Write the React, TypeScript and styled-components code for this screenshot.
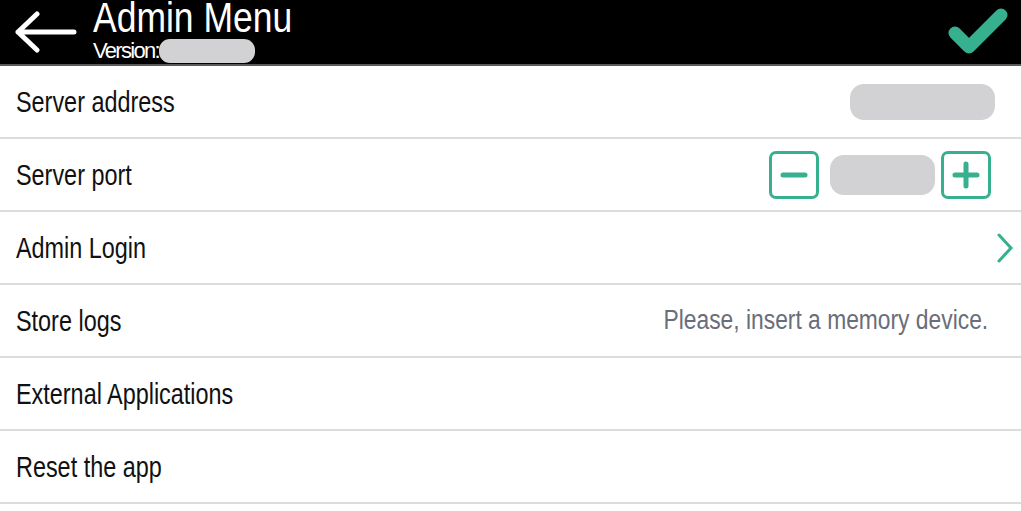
import React from 'react'
import styled, { createGlobalStyle } from 'styled-components'

const teal = '#36b08f'

const GlobalStyle = createGlobalStyle`
  html, body {
    margin: 0;
    padding: 0;
    background: #ffffff;
  }
  body {
    font-family: 'Liberation Sans', Arial, sans-serif;
    color: #111;
  }
`

const Screen = styled.div`
  width: 1021px;
  height: 511px;
  overflow: hidden;
  background: #fff;
`

const Header = styled.header`
  display: flex;
  align-items: center;
  height: 64px;
  padding: 0 12px 0 15px;
  background: #000;
  border-bottom: 2px solid #5a5a5a;
`

const BackButton = styled.div`
  display: flex;
  width: 62px;
  height: 44px;
  margin-right: 16px;
`

const TitleBlock = styled.div`
  display: flex;
  flex-direction: column;
  flex: 1;
  margin-top: -3px;
`

// the device font is a condensed face, so the text is squeezed horizontally
const Title = styled.h1`
  margin: 0;
  font-weight: 400;
  font-size: 42px;
  line-height: 40px;
  color: #fff;
  transform: scaleX(0.845);
  transform-origin: left center;
`

const VersionRow = styled.div`
  display: flex;
  align-items: center;
  margin-top: 1px;
  font-size: 22px;
  line-height: 24px;
  color: #fff;
  letter-spacing: -1.7px;
`

const Redacted = styled.span<{ $w: number; $h: number; $r?: number }>`
  display: inline-block;
  width: ${(p) => p.$w}px;
  height: ${(p) => p.$h}px;
  border-radius: ${(p) => p.$r ?? 14}px;
  background: #d2d2d4;
`

const List = styled.ul`
  margin: 0;
  padding: 0;
  list-style: none;
`

const Row = styled.li`
  display: flex;
  align-items: center;
  justify-content: space-between;
  height: 71px;
  padding: 0 6px 0 16px;
  border-bottom: 2px solid #dcdcdc;
`

const Label = styled.span`
  font-size: 30px;
  color: #111;
  white-space: nowrap;
  transform: scaleX(0.78);
  transform-origin: left center;
`

const Hint = styled.span`
  margin-right: 27px;
  font-size: 27px;
  color: #6a6d7a;
  white-space: nowrap;
  transform: scaleX(0.845);
  transform-origin: right center;
`

const Stepper = styled.div`
  display: flex;
  align-items: center;
  margin-right: 24px;
`

const StepButton = styled.button`
  display: flex;
  align-items: center;
  justify-content: center;
  width: 50px;
  height: 48px;
  padding: 0;
  border: 3px solid ${teal};
  border-radius: 7px;
  background: #fff;
`

const PortValue = styled.div`
  display: flex;
  margin: 0 6px 0 11px;
`

const RightSlot = styled.div<{ $mr: number }>`
  display: flex;
  align-items: center;
  margin-right: ${(p) => p.$mr}px;
`

function BackArrow() {
  return (
    <svg width="62" height="44" viewBox="0 0 62 44" fill="none">
      <path
        d="M3 22 H59 M22 4 L3 22 L22 40"
        stroke="#fff"
        strokeWidth="5"
        strokeLinecap="round"
        strokeLinejoin="round"
      />
    </svg>
  )
}

function Check() {
  return (
    <svg width="64" height="58" viewBox="0 0 64 58" fill="none">
      <path
        d="M10 30 L24 44 L56 12"
        stroke={teal}
        strokeWidth="13"
        strokeLinecap="round"
        strokeLinejoin="round"
      />
    </svg>
  )
}

function Chevron() {
  return (
    <svg width="20" height="32" viewBox="0 0 20 32" fill="none">
      <path d="M4 3 L16 16 L4 29" stroke={teal} strokeWidth="3" strokeLinecap="round" />
    </svg>
  )
}

function Sign({ plus }: { plus?: boolean }) {
  return (
    <svg width="30" height="30" viewBox="0 0 30 30" fill="none">
      <path
        d={plus ? 'M4 15 H26 M15 4 V26' : 'M4 15 H26'}
        stroke={teal}
        strokeWidth="5"
        strokeLinecap="round"
      />
    </svg>
  )
}

export default function App() {
  return (
    <Screen>
      <GlobalStyle />
      <Header>
        <BackButton>
          <BackArrow />
        </BackButton>
        <TitleBlock>
          <Title>Admin Menu</Title>
          <VersionRow>
            Version:
            <Redacted $w={96} $h={24} $r={11} />
          </VersionRow>
        </TitleBlock>
        <Check />
      </Header>
      <List>
        <Row>
          <Label>Server address</Label>
          <RightSlot $mr={20}>
            <Redacted $w={145} $h={36} />
          </RightSlot>
        </Row>
        <Row>
          <Label>Server port</Label>
          <Stepper>
            <StepButton>
              <Sign />
            </StepButton>
            <PortValue>
              <Redacted $w={105} $h={40} />
            </PortValue>
            <StepButton>
              <Sign plus />
            </StepButton>
          </Stepper>
        </Row>
        <Row>
          <Label>Admin Login</Label>
          <RightSlot $mr={0}>
            <Chevron />
          </RightSlot>
        </Row>
        <Row>
          <Label>Store logs</Label>
          <Hint>Please, insert a memory device.</Hint>
        </Row>
        <Row>
          <Label>External Applications</Label>
        </Row>
        <Row>
          <Label>Reset the app</Label>
        </Row>
      </List>
    </Screen>
  )
}
